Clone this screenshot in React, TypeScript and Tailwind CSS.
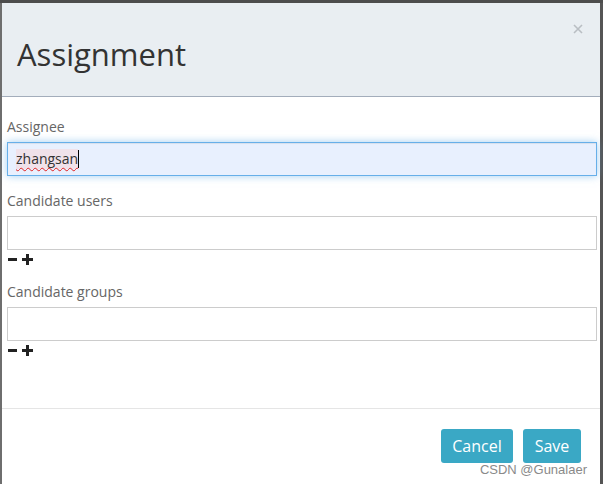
import React from "react";

const font = { fontFamily: '"Open Sans", "Noto Sans", sans-serif' };

function MinusPlus() {
  return (
    <div className="flex h-[17px] items-start pt-[4px] pl-[1px] gap-[5px]">
      <svg width="9" height="11" viewBox="0 0 9 11">
        <rect x="0" y="4" width="9" height="3" fill="#222" />
      </svg>
      <svg width="11" height="11" viewBox="0 0 11 11">
        <rect x="0" y="4" width="11" height="3" fill="#222" />
        <rect x="4" y="0" width="3" height="11" fill="#222" />
      </svg>
    </div>
  );
}

export default function App() {
  return (
    <div className="w-[603px] h-[484px] bg-[#4d4d4d] pt-[3px] overflow-hidden" style={font}>
      <div className="flex h-[481px]">
        <div className="w-[2px] bg-[#6e6e6e]" />
        <div className="relative w-[598px] bg-white flex flex-col">
          <div className="h-[94px] bg-[#e9eef2] border-b border-[#a3adbb] flex justify-between px-[15px]">
            <div className="pt-[34px] text-[31px] leading-[34px] text-[#333]">Assignment</div>
            <div className="pt-[21px] pr-[2px]">
              <svg width="10" height="10" viewBox="0 0 10 10">
                <path d="M1 1 L9 9 M9 1 L1 9" stroke="#b9bec3" strokeWidth="1.6" />
              </svg>
            </div>
          </div>
          <div className="h-[311px] pt-[20px] pl-[5px] pr-[3px] text-[14px] leading-[20px] text-[#666]">
            <div className="mb-[15px]">
              <div className="mb-[5px]">Assignee</div>
              <div className="h-[34px] bg-[#e8f0fe] border border-[#66afe9] shadow-[inset_0_1px_1px_rgba(0,0,0,0.075),0_0_8px_rgba(102,175,233,0.6)] flex items-center pl-[8px] text-[#333]">
                <span className="bg-[#f0e2ea] underline decoration-wavy decoration-[#e02020] decoration-1 underline-offset-[3px]">zhangsan</span>
                <span className="w-[1px] h-[18px] bg-black" />
              </div>
            </div>
            <div className="mb-[15px]">
              <div className="mb-[5px]">Candidate users</div>
              <div className="h-[34px] bg-white border border-[#cccccc]" />
              <MinusPlus />
            </div>
            <div>
              <div className="mb-[5px]">Candidate groups</div>
              <div className="h-[34px] bg-white border border-[#cccccc]" />
              <MinusPlus />
            </div>
          </div>
          <div className="flex-1 border-t border-[#e5e5e5] pt-[20px] pr-[19px] flex justify-end items-start gap-[10px]">
            <button className="h-[34px] w-[72px] rounded-[3px] bg-[#3aa8c5] text-white text-[16px] leading-[34px]">Cancel</button>
            <button className="h-[34px] w-[58px] rounded-[3px] bg-[#3aa8c5] text-white text-[16px] leading-[34px]">Save</button>
          </div>
          <div
            className="absolute right-[13px] bottom-[6px] text-[13px] leading-[16px] text-[#8a8a8a]"
            style={{ fontFamily: '"Liberation Sans", Arial, sans-serif' }}
          >
            CSDN @Gunalaer
          </div>
        </div>
        <div className="w-[3px] bg-[#555]" />
      </div>
    </div>
  );
}
